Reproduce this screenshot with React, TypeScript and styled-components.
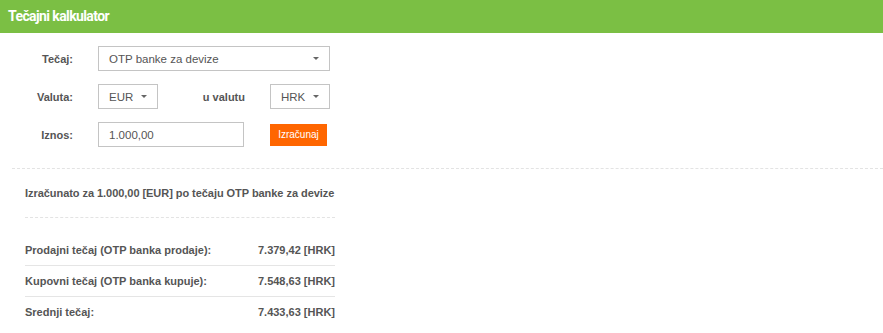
import React from "react"
import styled, { createGlobalStyle } from "styled-components"

const GlobalStyle = createGlobalStyle`
    body {
        margin: 0;
        background: #fff;
        font-family: "Liberation Sans", Arial, sans-serif;
        color: #555;
    }
`

const Header = styled.div`
    height: 33px;
    background: #7bbf44;
    color: #fff;
    font-family: Roboto, "Liberation Sans", sans-serif;
    font-weight: 700;
    font-size: 14px;
    letter-spacing: -0.6px;
    line-height: 33px;
    padding-left: 8px;
`

const Form = styled.div`
    display: flex;
    flex-direction: column;
    gap: 13px;
    padding: 13px 0 0 0;
`

const Row = styled.div`
    display: flex;
    align-items: center;
    height: 25px;
`

const Label = styled.div<{ $width: number }>`
    width: ${(p) => p.$width}px;
    text-align: right;
    font-size: 11px;
    font-weight: 700;
    color: #555;
    flex-shrink: 0;
`

const Field = styled.div<{ $width: number; $ml: number }>`
    box-sizing: border-box;
    width: ${(p) => p.$width}px;
    margin-left: ${(p) => p.$ml}px;
    height: 25px;
    border: 1px solid #c4c4c4;
    display: flex;
    align-items: center;
    justify-content: space-between;
    padding: 0 10px 0 10px;
    font-size: 11.5px;
    color: #555;
    flex-shrink: 0;
`

const Caret = styled.span`
    width: 0;
    height: 0;
    border-left: 3.5px solid transparent;
    border-right: 3.5px solid transparent;
    border-top: 3.5px solid #666;
`

const Button = styled.button`
    margin-left: 26px;
    width: 57px;
    height: 22px;
    border: none;
    padding: 0;
    background: #ff6600;
    color: #fff;
    font-family: "Liberation Sans", Arial, sans-serif;
    font-size: 10px;
`

const Divider = styled.div`
    margin: 21px 0 0 12px;
    border-top: 1px dashed #e3e3e3;
`

const Result = styled.div`
    width: 310px;
    margin-left: 25px;
`

const Title = styled.div`
    font-size: 11px;
    font-weight: 700;
    letter-spacing: -0.05px;
    color: #555;
    white-space: nowrap;
    line-height: 13px;
    padding: 18px 0 17px 0;
    border-bottom: 1px dashed #e3e3e3;
`

const List = styled.div`
    padding-top: 17px;
`

const Line = styled.div<{ $last?: boolean }>`
    display: flex;
    justify-content: space-between;
    font-size: 11px;
    font-weight: 700;
    color: #555;
    height: 30px;
    line-height: 30px;
    border-bottom: ${(p) => (p.$last ? "none" : "1px solid #e5e5e5")};
`

const rates = [
    { label: "Prodajni tečaj (OTP banka prodaje):", value: "7.379,42 [HRK]" },
    { label: "Kupovni tečaj (OTP banka kupuje):", value: "7.548,63 [HRK]" },
    { label: "Srednji tečaj:", value: "7.433,63 [HRK]" }
]

function App() {
    return (
        <>
            <GlobalStyle />
            <Header>Tečajni kalkulator</Header>
            <Form>
                <Row>
                    <Label $width={73}>Tečaj:</Label>
                    <Field $width={232} $ml={25}>
                        OTP banke za devize
                        <Caret />
                    </Field>
                </Row>
                <Row>
                    <Label $width={73}>Valuta:</Label>
                    <Field $width={60} $ml={25}>
                        EUR
                        <Caret />
                    </Field>
                    <Label $width={87}>u valutu</Label>
                    <Field $width={60} $ml={25}>
                        HRK
                        <Caret />
                    </Field>
                </Row>
                <Row>
                    <Label $width={73}>Iznos:</Label>
                    <Field $width={146} $ml={25}>1.000,00</Field>
                    <Button>Izračunaj</Button>
                </Row>
            </Form>
            <Divider />
            <Result>
                <Title>Izračunato za 1.000,00 [EUR] po tečaju OTP banke za devize</Title>
                <List>
                    {rates.map((r, i) => (
                        <Line key={r.label} $last={i === rates.length - 1}>
                            <span>{r.label}</span>
                            <span>{r.value}</span>
                        </Line>
                    ))}
                </List>
            </Result>
        </>
    )
}

export default App
